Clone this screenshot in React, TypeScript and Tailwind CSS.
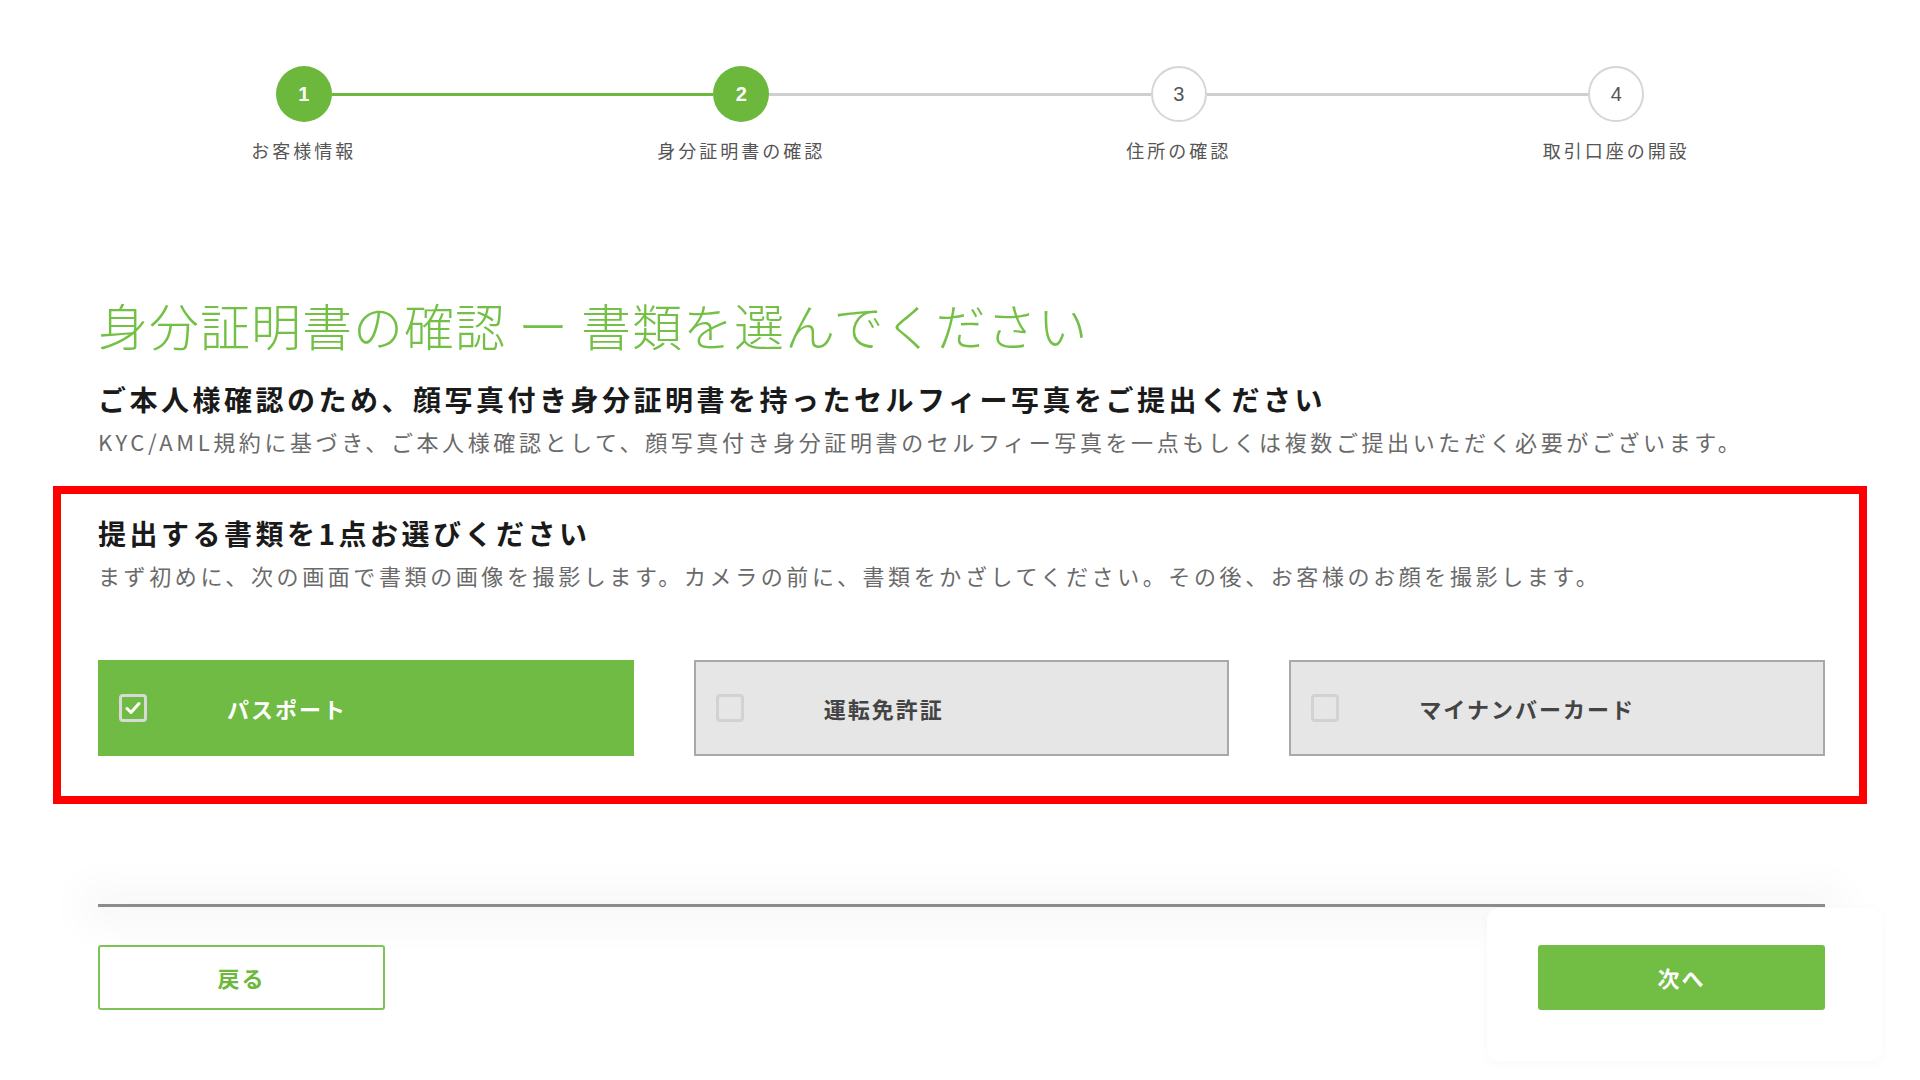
import React from "react";

const JP = "font-['Noto_Sans_CJK_JP','Noto_Sans',sans-serif]";

type Step = { n: number; label: string; done: boolean; left?: "green" | "gray"; right?: "green" | "gray" };

const steps: Step[] = [
  { n: 1, label: "お客様情報", done: true, right: "green" },
  { n: 2, label: "身分証明書の確認", done: true, left: "green", right: "gray" },
  { n: 3, label: "住所の確認", done: false, left: "gray", right: "gray" },
  { n: 4, label: "取引口座の開設", done: false, left: "gray" },
];

function Line({ c }: { c?: "green" | "gray" }) {
  if (!c) return <div className="flex-1" />;
  return <div className={`flex-1 h-[3px] ${c === "green" ? "bg-[#6cb83d]" : "bg-[#cfcfcf]"}`} />;
}

function Stepper() {
  return (
    <div className="grid grid-cols-4 w-[1750px] ml-[85px] pt-[66px]">
      {steps.map((s) => (
        <div key={s.n} className="flex flex-col items-center">
          <div className="flex items-center w-full">
            <Line c={s.left} />
            <div
              className={`w-[56px] h-[56px] rounded-full flex items-center justify-center text-[20px] font-['Liberation_Sans',sans-serif] ${
                s.done
                  ? "bg-[#6cb83d] text-white font-bold"
                  : "bg-white border-2 border-[#d6d6d6] text-[#555]"
              }`}
            >
              {s.n}
            </div>
            <Line c={s.right} />
          </div>
          <div className={`${JP} mt-[15px] text-[18px] leading-[26px] tracking-[3px] text-[#555]`}>{s.label}</div>
        </div>
      ))}
    </div>
  );
}

function CheckBox({ checked }: { checked: boolean }) {
  return (
    <div
      className={`w-[28px] h-[28px] rounded-[4px] border-[3px] flex items-center justify-center ${
        checked ? "border-[#d9d9d9]" : "border-[#d2d2d2]"
      }`}
    >
      {checked && (
        <svg width="16" height="14" viewBox="0 0 16 14" fill="none">
          <path d="M2 7.5 L6 11.5 L14 2.5" stroke="white" strokeWidth="3" strokeLinecap="round" strokeLinejoin="round" />
        </svg>
      )}
    </div>
  );
}

function Option({ label, checked }: { label: string; checked: boolean }) {
  return (
    <div
      className={`h-[96px] flex items-center pl-[20px] ${
        checked ? "bg-[#70bb44] border border-[#70bb44]" : "bg-[#e6e6e6] border-2 border-[#a8a8a8]"
      }`}
    >
      <CheckBox checked={checked} />
      <span
        className={`${JP} ml-[80px] text-[22px] font-bold tracking-[2px] ${checked ? "text-white" : "text-[#444]"}`}
      >
        {label}
      </span>
    </div>
  );
}

export default function App() {
  return (
    <div className={`w-[1920px] h-[1080px] bg-white overflow-hidden ${JP}`}>
      <Stepper />
      <div className="pl-[98px] pr-[95px]">
        <h1 className="mt-[131px] text-[50px] leading-[60px] font-light tracking-[1px] text-[#74c047]">
          身分証明書の確認 ー 書類を選んでください
        </h1>
        <h2 className="mt-[27px] text-[28px] leading-[36px] font-bold tracking-[3.5px] text-[#1a1a1a]">
          ご本人様確認のため、顔写真付き身分証明書を持ったセルフィー写真をご提出ください
        </h2>
        <p className="mt-[9px] text-[22px] leading-[30px] tracking-[3.6px] text-[#6a6a6a]">
          KYC/AML規約に基づき、ご本人様確認として、顔写真付き身分証明書のセルフィー写真を一点もしくは複数ご提出いただく必要がございます。
        </p>
      </div>
      <div className="ml-[53px] mr-[53px] mt-[30px] border-[8px] border-[#ff0000] pl-[37px] pr-[34px] pt-[21px] pb-[40px]">
        <h3 className="text-[28px] leading-[36px] font-bold tracking-[3.5px] text-[#1a1a1a]">
          提出する書類を1点お選びください
        </h3>
        <p className="mt-[9px] text-[22px] leading-[30px] tracking-[3.6px] text-[#6a6a6a]">
          まず初めに、次の画面で書類の画像を撮影します。カメラの前に、書類をかざしてください。その後、お客様のお顔を撮影します。
        </p>
        <div className="mt-[70px] grid grid-cols-3 gap-[60px]">
          <Option label="パスポート" checked />
          <Option label="運転免許証" checked={false} />
          <Option label="マイナンバーカード" checked={false} />
        </div>
      </div>
      <div className="pl-[98px] pr-[95px]">
        <div className="mt-[100px] h-[3px] bg-[#8c8c8c] shadow-[0_0_40px_18px_rgba(0,0,0,0.035)]" />
        <div className="mt-[38px] flex justify-between items-start">
          <button className="w-[287px] h-[65px] border-2 border-[#7cc456] rounded-[3px] bg-white text-[#6cb83d] text-[22px] font-bold tracking-[2px]">
            戻る
          </button>
          <div className="-mt-[37px] -mr-[57px] pt-[37px] pl-[51px] pr-[57px] pb-[51px] rounded-[12px] bg-white shadow-[0_2px_12px_rgba(0,0,0,0.03)]">
            <button className="w-[287px] h-[65px] rounded-[3px] bg-[#72bd44] text-white text-[22px] font-bold tracking-[2px]">
              次へ
            </button>
          </div>
        </div>
      </div>
    </div>
  );
}
